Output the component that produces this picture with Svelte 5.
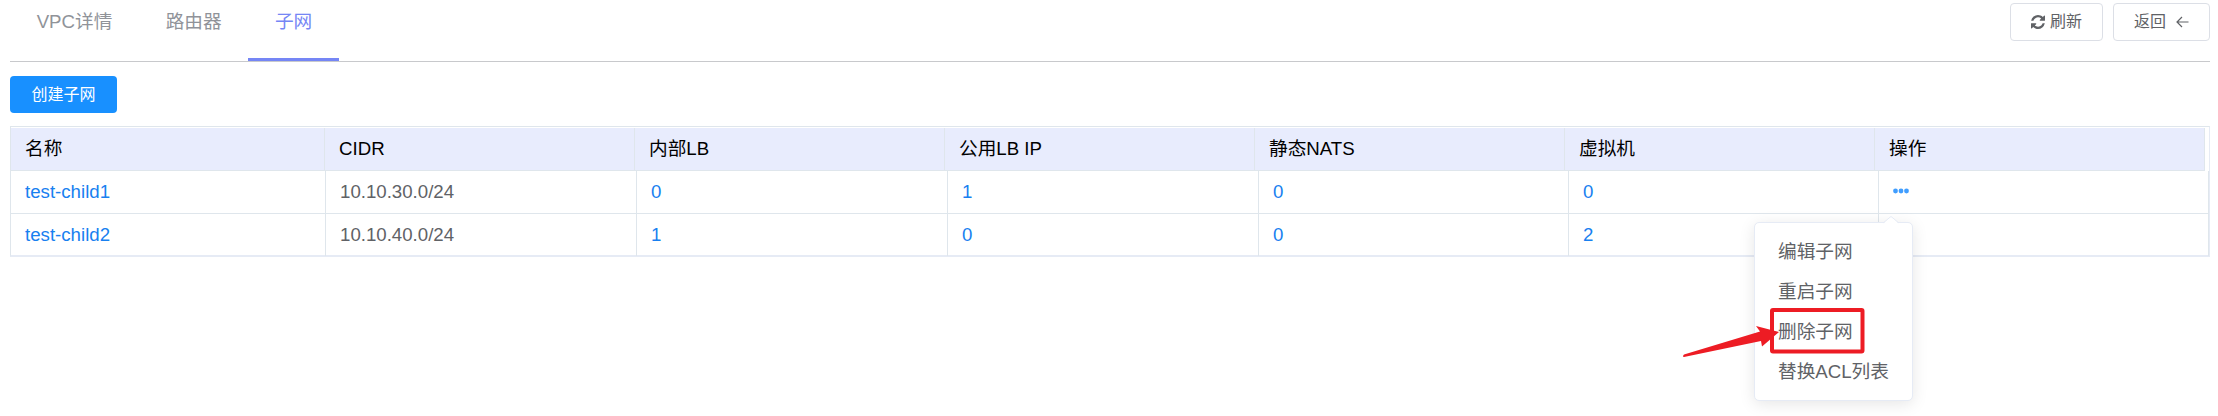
<script>
  const tabs = ['VPC详情', '路由器', '子网'];
  const active = '子网';
  const columns = ['名称', 'CIDR', '内部LB', '公用LB IP', '静态NATS', '虚拟机', '操作'];
  const rows = [
    { name: 'test-child1', cidr: '10.10.30.0/24', counts: [0, 1, 0, 0], menu: true },
    { name: 'test-child2', cidr: '10.10.40.0/24', counts: [1, 0, 0, 2], menu: false }
  ];
  const actions = ['编辑子网', '重启子网', '删除子网', '替换ACL列表'];
</script>

<div class="page">
  <header>
    <nav>
      {#each tabs as tab}
        <span class="tab" class:active={tab === active}>{tab}</span>
      {/each}
    </nav>
    <div class="tools">
      <button class="refresh">
        <svg width="14" height="14" viewBox="0 0 1536 1536" fill="currentColor">
          <path d="M1511 928q0 5-1 7-64 268-268 434.500T764 1536q-146 0-282.500-55T238 1324l-129 129q-19 19-45 19t-45-19-19-45V960q0-26 19-45t45-19h448q26 0 45 19t19 45-19 45l-137 137q71 66 161 102t187 36q134 0 250-65t186-179q11-17 53-117 8-23 30-23h192q13 0 22.500 9.500t9.500 22.500zM1536 128v448q0 26-19 45t-45 19h-448q-26 0-45-19t-19-45 19-45l138-138Q969 256 768 256q-134 0-250 65T332 500q-11 17-53 117-8 23-30 23H50q-13 0-22.500-9.500T18 608v-7q65-268 270-434.500T768 0q146 0 284 55.500T1297 212l130-129q19-19 45-19t45 19 19 45z" />
        </svg>
        <span>刷新</span>
      </button>
      <button class="back">
        <span>返回</span>
        <svg width="13" height="12" viewBox="0 0 13 12" fill="none" stroke="currentColor" stroke-width="1.2">
          <path d="M12.500 6H1M6 1L1 6L6 11" />
        </svg>
      </button>
    </div>
  </header>

  <button class="create">创建子网</button>

  <section class="table">
    <div class="row head">
      {#each columns as column}
        <div class="cell">{column}</div>
      {/each}
    </div>
    {#each rows as row}
      <div class="row">
        <div class="cell link">{row.name}</div>
        <div class="cell">{row.cidr}</div>
        {#each row.counts as count}
          <div class="cell link">{count}</div>
        {/each}
        <div class="cell">
          {#if row.menu}
            <svg class="dots" width="16" height="6" viewBox="0 0 16 6" fill="#409eff">
              <circle cx="2.500" cy="3" r="2.400" />
              <circle cx="8" cy="3" r="2.400" />
              <circle cx="13.500" cy="3" r="2.400" />
            </svg>
          {/if}
        </div>
      </div>
    {/each}
  </section>

  <div class="popover">
    <svg class="tip" width="18" height="8" viewBox="0 0 18 8">
      <path d="M1 8L9 0.500L17 8Z" fill="#fff" />
      <path d="M1 7L9 0.500L17 7" fill="none" stroke="#e6ebf5" />
    </svg>
    {#each actions as action}
      <div class="action">{action}</div>
    {/each}
  </div>

  <svg class="marker" width="190" height="60" viewBox="0 0 190 60">
    <rect x="92" y="12" width="90.500" height="41.500" rx="1" fill="none" stroke="#ed1c24" stroke-width="4" />
    <path d="M4 59Q2 58.500 4 56.500L80 33.500L76 28L99 34L82 48.500L81 43Z" fill="#ed1c24" />
  </svg>
</div>

<style>
  .page {
    position: relative;
    box-sizing: border-box;
    width: 2218px;
    height: 416px;
    padding: 0 8px 0 10px;
    overflow: hidden;
    background: #fff;
    color: #606266;
    font: 18.67px/24px 'Liberation Sans', 'Noto Sans CJK SC', sans-serif;
  }
  header {
    display: flex;
    justify-content: space-between;
    box-sizing: border-box;
    height: 62px;
    border-bottom: 1px solid #c8c9cc;
  }
  nav {
    display: flex;
  }
  .tab {
    box-sizing: border-box;
    height: 61px;
    padding: 10px 26.67px 0;
    color: #909399;
  }
  .tab.active {
    border-bottom: 3px solid #7586f5;
    color: #7586f5;
  }
  .tools {
    display: flex;
    gap: 10px;
    padding-top: 3px;
  }
  button {
    display: flex;
    align-items: center;
    justify-content: center;
    box-sizing: border-box;
    height: 38px;
    margin: 0;
    padding: 0;
    border: 1px solid #dcdfe6;
    border-radius: 4px;
    background: #fff;
    color: #606266;
    font: 16px/24px 'Liberation Sans', 'Noto Sans CJK SC', sans-serif;
  }
  .refresh {
    width: 93px;
    gap: 5px;
  }
  .back {
    width: 97px;
    gap: 10px;
  }
  .create {
    width: 107px;
    height: 37px;
    margin-top: 14px;
    border: 0;
    background: #1890ff;
    color: #fff;
  }
  .table {
    box-sizing: border-box;
    height: 131px;
    margin-top: 13px;
    border: 1px solid #dfe6ec;
    border-right-color: #e6ebf5;
    border-bottom: 2px solid #e6ebf5;
    padding-top: 1px;
  }
  .row {
    display: grid;
    grid-template-columns: 315px 311px 311px 311px 310px 310px 330px;
    height: 43px;
  }
  .row:last-child {
    height: 42px;
  }
  .head {
    grid-template-columns: 314px repeat(5, 310px) 330px;
    width: 2194px;
    background: #e8ecfd;
    color: #000;
  }
  .cell {
    box-sizing: border-box;
    padding: 9px 0 0 14px;
    border-right: 1px solid #dfe6ec;
    border-bottom: 1px solid #dfe6ec;
  }
  .row:last-child .cell {
    border-bottom: 0;
  }
  .link {
    color: #1880f0;
  }
  .dots {
    display: block;
    margin-top: 8px;
  }
  .popover {
    position: absolute;
    left: 1754px;
    top: 222px;
    box-sizing: border-box;
    width: 159px;
    height: 179px;
    padding: 9px 0 0 23px;
    border: 1px solid #e6ebf5;
    border-radius: 5px;
    background: #fff;
    box-shadow: 0 3px 16px rgba(0, 0, 0, 0.1);
  }
  .tip {
    position: absolute;
    top: -7px;
    left: 127px;
  }
  .action {
    height: 40px;
    line-height: 40px;
    white-space: nowrap;
  }
  .marker {
    position: absolute;
    left: 1680px;
    top: 298px;
  }
</style>
